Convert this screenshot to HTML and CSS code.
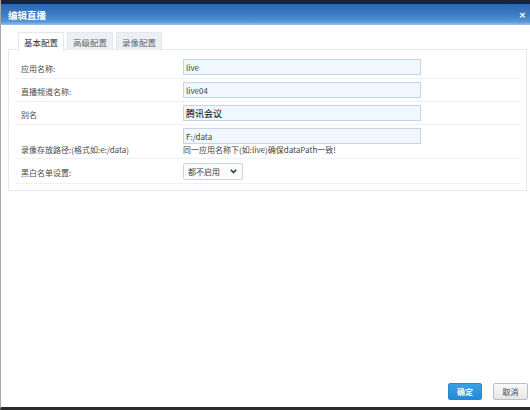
FILE: index.html
```html
<!DOCTYPE html>
<html>
<head>
<meta charset="utf-8">
<link rel="stylesheet" href="styles.css">
</head>
<body>
<div class="window">
  <div class="titlebar">
    <span class="title">编辑直播</span>
    <span class="close">✕</span>
  </div>
  <div class="content">
    <div class="tabs">
      <div class="tab active">基本配置</div>
      <div class="tab">高级配置</div>
      <div class="tab">录像配置</div>
    </div>
    <div class="panel">
      <div class="row">
        <div class="label">应用名称:</div>
        <div class="field"><div class="input">live</div></div>
      </div>
      <div class="row">
        <div class="label">直播频道名称:</div>
        <div class="field"><div class="input">live04</div></div>
      </div>
      <div class="row">
        <div class="label">别名</div>
        <div class="field"><div class="input strong">腾讯会议</div></div>
      </div>
      <div class="row row-bottom">
        <div class="label">录像存放路径:(格式如:e:/data)</div>
        <div class="field">
          <div class="input">F:/data</div>
          <div class="hint">同一应用名称下(如:live)确保dataPath一致!</div>
        </div>
      </div>
      <div class="row row-select">
        <div class="label">黑白名单设置:</div>
        <div class="field">
          <div class="select"><span>都不启用</span>
            <svg class="chev" width="7" height="5" viewBox="0 0 7 5"><path d="M0.8 0.8 L3.5 3.6 L6.2 0.8" fill="none" stroke="#333" stroke-width="1.5"/></svg>
          </div>
        </div>
      </div>
    </div>
  </div>
  <div class="footer">
    <div class="btn primary">确定</div>
    <div class="btn">取消</div>
  </div>
</div>
</body>
</html>
```
FILE: styles.css
```css
* { box-sizing: border-box; }
html, body { margin: 0; padding: 0; background: #fff; }
body { font-family: "Noto Sans CJK SC", "Noto Sans", sans-serif; font-size: 8px; color: #444; }
.window {
  width: 530px; height: 410px;
  border-left: 1px solid #a8a8a8;
  border-bottom: 3px solid #2b2b2b;
  display: flex; flex-direction: column;
  background: #fff;
}
.titlebar {
  height: 25px;
  border-top: 4px solid #18233a;
  background: linear-gradient(#2c67b0 0%, #3f7fc8 55%, #5b97d6 85%, #9cc1ea 100%);
  color: #fff;
  display: flex; align-items: center; justify-content: space-between;
  padding: 0 4px 0 7px;
}
.title { font-size: 9.5px; font-weight: bold; }
.close { font-size: 8px; font-weight: bold; color: #fff; }
.content { flex: 1; padding: 7px 3px 0 7px; }
.tabs { display: flex; gap: 3px; margin-left: 10px; margin-bottom: -1px; position: relative; }
.tab {
  height: 18px; padding: 0 5px;
  display: flex; align-items: center;
  border: 1px solid #e3e7ee; border-bottom: none;
  background: #eceff4; color: #666; font-size: 8.5px;
}
.tab.active { background: #fff; color: #333; height: 19px; margin-bottom: -1px; }
.panel {
  border: 1px solid #e4e8ef;
  padding: 6px;
}
.row {
  display: grid; grid-template-columns: 168px 238px;
  align-items: center;
  padding: 3px 0;
  border-bottom: 1px solid #eef0f3;
}
.label { padding-left: 6px; padding-top: 2px; color: #4a4a4a; }
.input {
  height: 16px; border: 1px solid #c6d5e4; background: #f0f7fe;
  padding: 0 2px; display: flex; align-items: center; color: #444; font-size: 8px;
}
.input.strong { color: #000; font-size: 9px; }
.row-bottom { align-items: end; }
.row-bottom .label { padding-top: 0; line-height: 11px; }
.hint { line-height: 11px; color: #444; }
.row-select { padding: 4px 0 3px; }
.select {
  width: 60px; height: 17px; border: 1px solid #cfd5dc; border-radius: 2px;
  display: flex; align-items: center; justify-content: space-between;
  padding: 0 5px 0 4px; color: #444; background: #fafbfc;
}
.footer { display: flex; justify-content: flex-end; gap: 11px; padding: 0 2px 7px 0; }
.btn {
  width: 35px; height: 17px; border: 1px solid #b9bec5; border-radius: 2px;
  background: linear-gradient(#fafafa, #e6e6e6);
  display: flex; align-items: center; justify-content: center;
  color: #444; font-size: 8px;
}
.btn.primary { width: 34px; border-color: #2588d0; background: linear-gradient(#3ba0e6, #238bd4); color: #fff; font-weight: bold; }
```
